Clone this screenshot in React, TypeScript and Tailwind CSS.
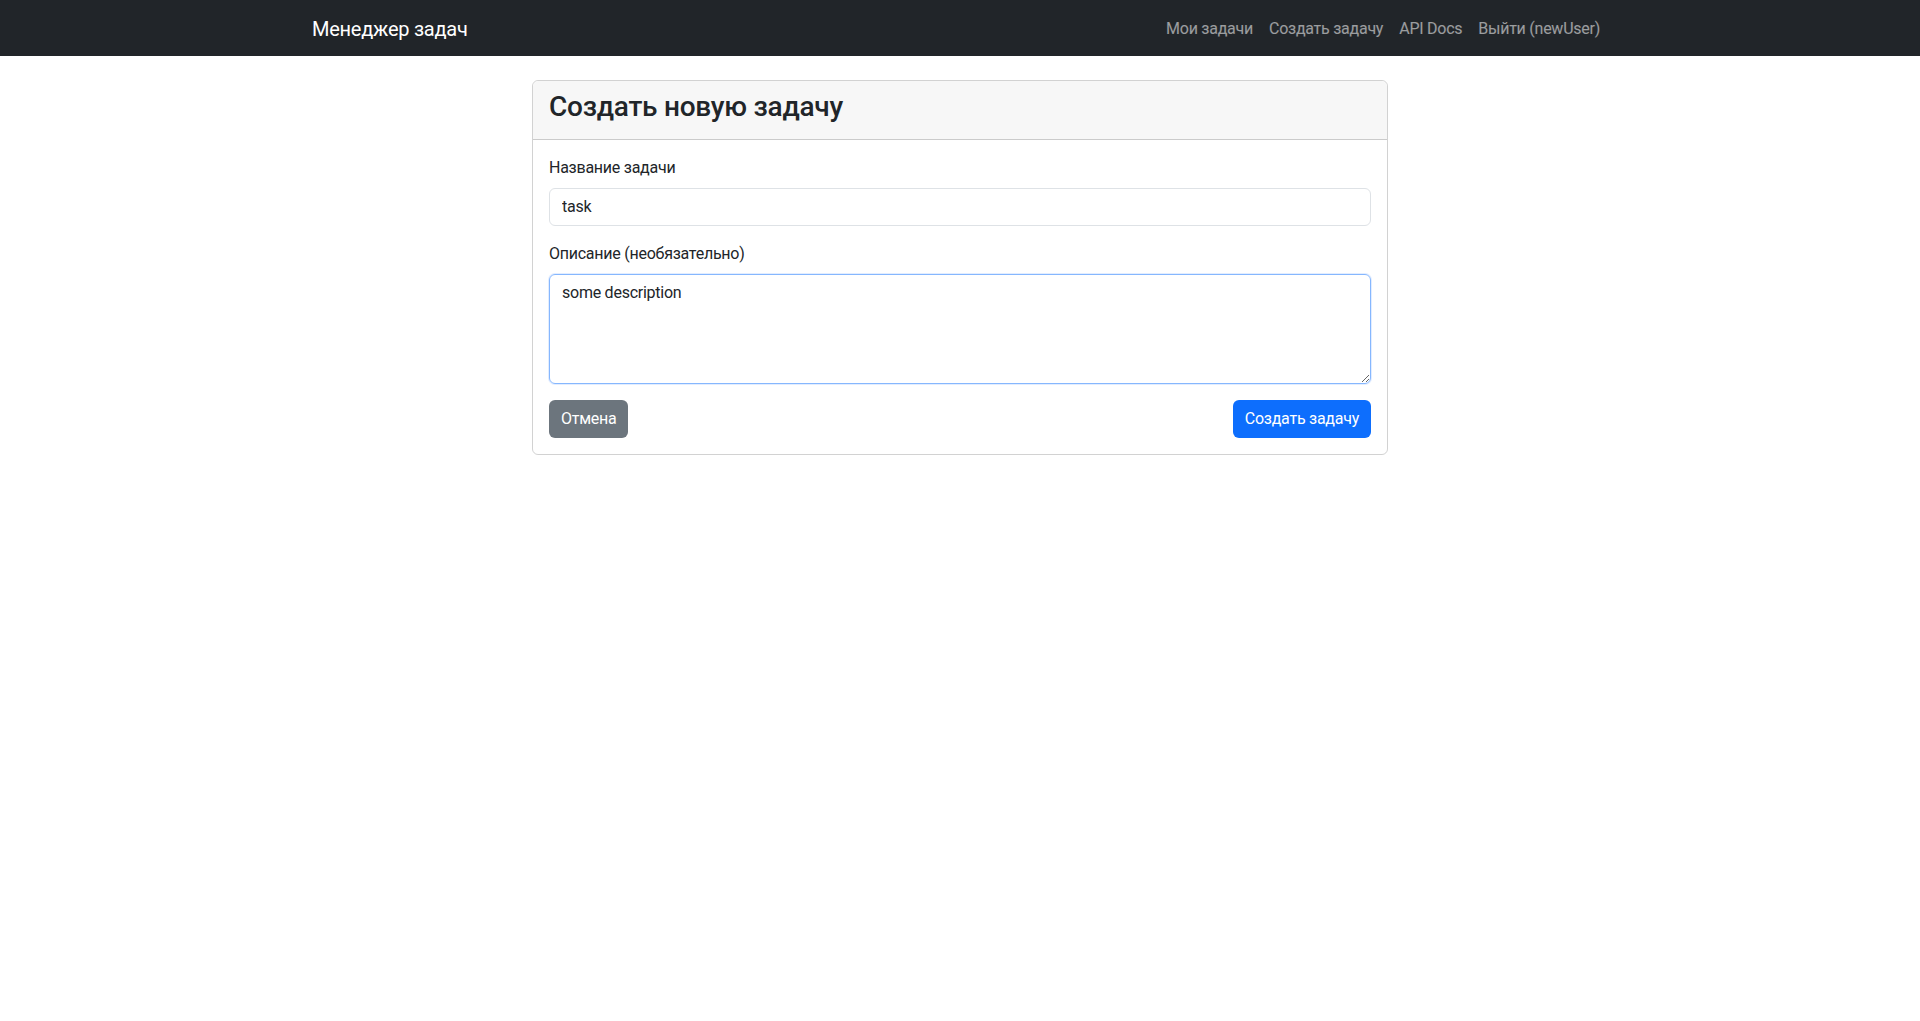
import { useState } from "react";

const navLinks = ["Мои задачи", "Создать задачу", "API Docs", "Выйти (newUser)"];

export default function App() {
  const [title, setTitle] = useState("task");
  const [description, setDescription] = useState("some description");

  return (
    <div className="min-h-[1021px] bg-white text-[#212529] font-['Roboto',sans-serif] text-base leading-6 tracking-[-0.25px]">
      {/* Navbar */}
      <nav className="bg-[#212529] h-14">
        <div className="w-[1320px] mx-auto px-3 h-full flex items-center justify-between">
          <a href="#" className="text-white text-xl leading-[30px] pt-[6px] pb-[4px]">
            Менеджер задач
          </a>
          <ul className="flex items-center">
            {navLinks.map((link) => (
              <li key={link}>
                <a href="#" className="block px-2 pt-[9px] pb-[7px] text-white/55 hover:text-white/75">
                  {link}
                </a>
              </li>
            ))}
          </ul>
        </div>
      </nav>

      {/* Content */}
      <div className="w-[1320px] mx-auto px-3 mt-6">
        <div className="w-[856px] ml-[220px] border border-black/[0.175] rounded-md">
          <div className="bg-[#f7f7f7] border-b border-black/[0.175] rounded-t-md px-4 py-2">
            <h3 className="text-[28px] leading-[1.2] font-medium pt-px mb-[7px]">Создать новую задачу</h3>
          </div>
          <form className="p-4" onSubmit={(e) => e.preventDefault()}>
            <div className="mb-4">
              <label className="block mb-2">Название задачи</label>
              <input
                value={title}
                onChange={(e) => setTitle(e.target.value)}
                className="block w-full h-[38px] px-3 py-1.5 border border-[#dee2e6] rounded-md outline-none text-[#212529]"
              />
            </div>
            <div className="mb-4">
              <label className="block mb-2">Описание (необязательно)</label>
              <textarea
                rows={4}
                value={description}
                onChange={(e) => setDescription(e.target.value)}
                className="block w-full h-[110px] px-3 py-1.5 border border-[#86b7fe] rounded-md outline-none shadow-[0_0_0_1px_rgba(13,110,253,0.12)] text-[#212529] resize-y"
              />
            </div>
            <div className="flex justify-between">
              <button type="button" className="h-[38px] px-3 rounded-md bg-[#6c757d] text-white">
                Отмена
              </button>
              <button type="submit" className="h-[38px] px-3 rounded-md bg-[#0d6efd] text-white">
                Создать задачу
              </button>
            </div>
          </form>
        </div>
      </div>
    </div>
  );
}
